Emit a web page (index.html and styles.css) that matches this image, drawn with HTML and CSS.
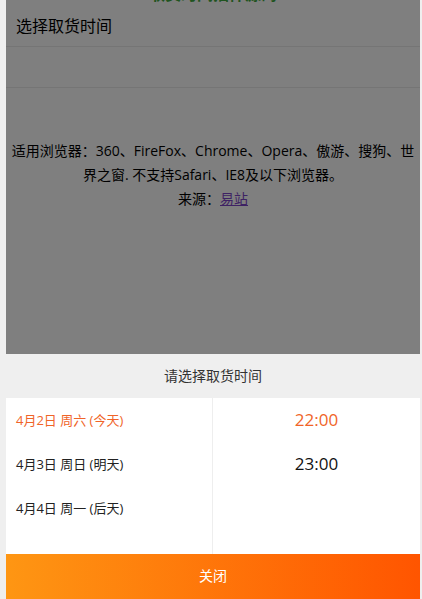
FILE: index.html
```html
<!DOCTYPE html>
<html lang="zh-CN">
<head>
<meta charset="utf-8">
<title>选择取货时间</title>
<link rel="stylesheet" href="styles.css">
</head>
<body>
<div class="page">
  <h1 class="title">取货时间插件源码</h1>
  <div class="row">选择取货时间</div>
  <div class="row"></div>
  <p class="note">适用浏览器：360、FireFox、Chrome、Opera、傲游、搜狗、世界之窗. 不支持Safari、IE8及以下浏览器。<br>来源：<a href="#" class="src">易站</a></p>

  <div class="mask"></div>
  <div class="popup">
    <div class="popup-head">请选择取货时间</div>
    <div class="popup-body">
      <ul class="days">
        <li class="day active">4月2日 周六 (今天)</li>
        <li class="day">4月3日 周日 (明天)</li>
        <li class="day">4月4日 周一 (后天)</li>
      </ul>
      <ul class="times">
        <li class="time active">22:00</li>
        <li class="time">23:00</li>
      </ul>
    </div>
    <div class="close">关闭</div>
  </div>
</div>
</body>
</html>
```

FILE: styles.css
```css
html, body {
  margin: 0;
  padding: 0;
  height: 100%;
}
body {
  background: #efefef;
  font-family: "Open Sans", "Noto Sans CJK SC", sans-serif;
  color: #000;
  overflow: hidden;
}
.page {
  position: relative;
  width: 414px;
  height: 599px;
  margin-left: 6px;
  background: #fff;
  overflow: hidden;
}
.title {
  margin: -18px 0 0;
  height: 24px;
  line-height: 24px;
  font-size: 16px;
  font-weight: bold;
  text-align: center;
  color: #3fa83f;
}
.row {
  height: 40px;
  line-height: 40px;
  padding-left: 10px;
  font-size: 16px;
  border-bottom: 1px solid #eaeaea;
}
.note {
  margin: 51px 0 0;
  padding: 0 5px;
  font-size: 14px;
  line-height: 24px;
  text-align: center;
}
.src {
  color: #7d45c8;
}
.mask {
  position: absolute;
  inset: 0;
  background: rgba(0, 0, 0, 0.5);
}
.popup {
  position: absolute;
  left: 0;
  right: 0;
  bottom: 0;
  background: #fff;
}
.popup-head {
  height: 44px;
  line-height: 44px;
  background: #efefef;
  text-align: center;
  font-size: 14px;
  color: #333;
}
.popup-body {
  display: grid;
  grid-template-columns: 207px 1fr;
  height: 156px;
}
.days, .times {
  list-style: none;
  margin: 0;
  padding: 0;
}
.days {
  border-right: 1px solid #eee;
}
.day {
  height: 44px;
  line-height: 44px;
  padding-left: 10px;
  font-size: 13px;
  color: #222;
}
.time {
  height: 44px;
  line-height: 44px;
  text-align: center;
  font-size: 17px;
  color: #111;
}
.day.active, .time.active {
  color: #f06428;
}
.close {
  height: 45px;
  line-height: 44px;
  text-align: center;
  font-size: 14px;
  color: #fff;
  background: linear-gradient(to right, #fe9613, #ff5500);
}
```
